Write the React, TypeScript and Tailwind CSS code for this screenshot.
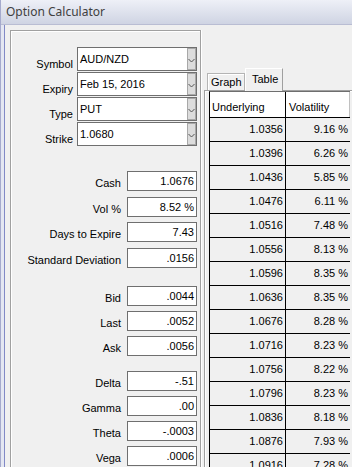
import React from "react";

const Chevron = () => (
  <svg width="7" height="5" viewBox="0 0 7 5" className="block">
    <path d="M0.5 1 L3.5 4 L6.5 1" fill="none" stroke="#555" strokeWidth="1" />
  </svg>
);

function Combo({ label, value }: { label: string; value: string }) {
  return (
    <div className="flex items-end">
      <div className="w-[62px] text-right leading-[14px] text-black">{label}</div>
      <div className="ml-[4px] w-[120px] h-[24px] border border-[#6f6f6f] bg-white flex items-stretch">
        <div className="flex-1 pl-[2px] flex items-center leading-[13px]">{value}</div>
        <div className="w-[9px] bg-[#dcdcdc] border border-[#a8a8a8] flex items-center justify-center pt-[2px]">
          <Chevron />
        </div>
      </div>
    </div>
  );
}

function Field({ label, value, mt }: { label: string; value: string; mt: string }) {
  return (
    <div className={"flex items-end " + mt}>
      <div className="w-[110px] text-right leading-[13px] pb-[1px] text-black">{label}</div>
      <div className="ml-[6px] w-[70px] h-[20px] border border-[#6f6f6f] bg-white flex items-center justify-end pr-[2px] leading-[13px]">
        {value}
      </div>
    </div>
  );
}

const rows: [string, string][] = [
  ["1.0356", "9.16 %"],
  ["1.0396", "6.26 %"],
  ["1.0436", "5.85 %"],
  ["1.0476", "6.11 %"],
  ["1.0516", "7.48 %"],
  ["1.0556", "8.13 %"],
  ["1.0596", "8.35 %"],
  ["1.0636", "8.35 %"],
  ["1.0676", "8.28 %"],
  ["1.0716", "8.23 %"],
  ["1.0756", "8.22 %"],
  ["1.0796", "8.23 %"],
  ["1.0836", "8.18 %"],
  ["1.0876", "7.93 %"],
  ["1.0916", "7.28 %"],
];

export default function App() {
  return (
    <div
      className="w-[352px] h-[467px] overflow-hidden bg-[#f0f0f0] border-l border-[#a5aacd] flex flex-col text-[11px] text-black"
      style={{ fontFamily: '"Liberation Sans", Arial, sans-serif' }}
    >
      <div
        className="h-[25px] shrink-0 bg-gradient-to-b from-[#eef0f7] to-[#cfd4e3] border-b border-[#b9bdd3] flex items-center pl-[5px] text-[12px] text-[#404040]"
        style={{ fontFamily: '"Noto Sans", "Open Sans", sans-serif' }}
      >
        Option Calculator
      </div>
      <div className="flex-1 flex min-h-0">
        <div className="w-[4px] shrink-0 bg-[#e4e7f2] border-r border-[#8189c6]" />
        <div className="flex-1 flex pt-[5px] min-w-0">
          <div className="ml-[5px] w-[191px] h-[460px] shrink-0 border border-[#a0a0a0] shadow-[inset_1px_1px_0_#ffffff,1px_0_0_#ffffff] pt-[16px] flex flex-col">
            <div className="flex flex-col gap-[1px]">
              <Combo label="Symbol" value="AUD/NZD" />
              <Combo label="Expiry" value="Feb 15, 2016" />
              <Combo label="Type" value="PUT" />
              <Combo label="Strike" value="1.0680" />
            </div>
            <Field label="Cash" value="1.0676" mt="mt-[25px]" />
            <Field label="Vol %" value="8.52 %" mt="mt-[6px]" />
            <Field label="Days to Expire" value="7.43" mt="mt-[5px]" />
            <Field label="Standard Deviation" value=".0156" mt="mt-[6px]" />
            <Field label="Bid" value=".0044" mt="mt-[18px]" />
            <Field label="Last" value=".0052" mt="mt-[5px]" />
            <Field label="Ask" value=".0056" mt="mt-[5px]" />
            <Field label="Delta" value="-.51" mt="mt-[15px]" />
            <Field label="Gamma" value=".00" mt="mt-[5px]" />
            <Field label="Theta" value="-.0003" mt="mt-[5px]" />
            <Field label="Vega" value=".0006" mt="mt-[5px]" />
          </div>
          <div className="flex-1 min-w-0 pl-[3px] pt-[38px] flex flex-col">
            <div className="flex items-end pl-[3px] h-[22px] relative z-10">
              <div className="w-[38px] h-[17px] border border-b-0 border-[#b4b4b4] shadow-[inset_1px_1px_0_#ffffff] flex items-start pt-[2px] pl-[3px] leading-[13px]">
                Graph
              </div>
              <div className="w-[38px] h-[23px] -mb-[1px] bg-[#f0f0f0] border-l border-t border-r border-l-[#ffffff] border-t-[#ffffff] border-r-[#a0a0a0] flex items-start pt-[4px] pl-[6px] leading-[13px]">
                Table
              </div>
            </div>
            <div className="flex-1 border-l border-t border-[#a0a0a0] shadow-[inset_1px_1px_0_#ffffff] pl-[4px]">
              <div className="w-[141px]">
                <div className="h-[27px] flex bg-white border-t border-[#6e6e6e] border-b border-b-black border-l border-l-black">
                  <div className="w-[76px] border-r border-black flex items-end pb-[3px] pl-[2px] leading-[13px]">
                    Underlying
                  </div>
                  <div className="flex-1 flex items-end pb-[3px] pl-[3px] leading-[13px] border-r border-[#c0c0c0]">
                    Volatility
                  </div>
                </div>
                {rows.map(([u, v]) => (
                  <div key={u} className="h-[24px] flex bg-[#f0f0f0] border-b border-black border-l">
                    <div className="w-[76px] border-r border-black flex items-center justify-end pr-[2px] leading-[13px]">
                      {u}
                    </div>
                    <div className="flex-1 flex items-center justify-end pr-[2px] leading-[13px]">{v}</div>
                  </div>
                ))}
              </div>
            </div>
          </div>
        </div>
      </div>
    </div>
  );
}
